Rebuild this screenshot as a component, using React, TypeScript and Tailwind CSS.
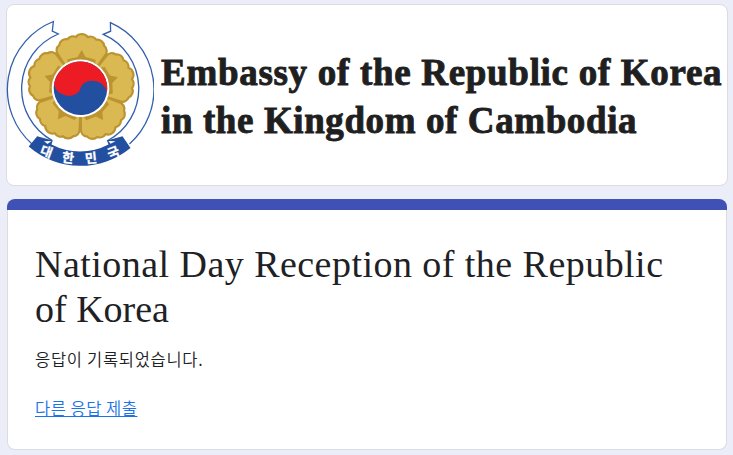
const PETAL =
    'M-13-18 L-23.5-33.5 A6.5 6.5 0 0 1 -22.5-43 A7 7 0 0 1 -14.5-49 A7 7 0 0 1 -6-51.5 A7.5 7.5 0 0 1 6-51.5 A7 7 0 0 1 14.5-49 A7 7 0 0 1 22.5-43 A6.5 6.5 0 0 1 23.5-33.5 L13-18Z';

const PETAL_ANGLES = [1, 73, 145, 217, 289];

const BANNER_LETTERS = [
    { char: '대', x: 46.5, y: 151.6, angle: 20 },
    { char: '한', x: 68, y: 157.6, angle: 7 },
    { char: '민', x: 91, y: 158.2, angle: -6 },
    { char: '국', x: 113.4, y: 152.4, angle: -21 },
];

const Emblem = () => (
    <svg width="148" height="150" viewBox="6 19 148 150" className="shrink-0" aria-hidden="true">
        {/* Ribbon */}
        <g fill="none" stroke="#315fad" strokeWidth="1.3">
            <path d="M32 144 A73 73 0 0 1 53.4 21.5 L52.3 31 L58.3 34 A59.2 59.2 0 0 0 52.3 140.6" />
            <path d="M129.5 144 A73 73 0 0 0 110.4 22.7 L110.6 31.2 L103.3 34.3 A59.2 59.2 0 0 1 107 141" />
        </g>

        {/* Flower */}
        <g transform="translate(81 88.5)">
            <circle r="42" fill="#bb9431" />
            {PETAL_ANGLES.map((angle) => (
                <g key={angle} transform={`rotate(${angle})`}>
                    <path d={PETAL} fill="#dab852" stroke="#bb9431" strokeWidth="2.2" />
                    <path d="M0-38.5 L4-31.5 L14-29 V-24 H-14 V-29 L-4-31.5Z" fill="#bb9431" />
                </g>
            ))}
        </g>

        {/* Taegeuk */}
        <g transform="translate(80.5 88.3) rotate(14)">
            <circle r="28.8" fill="#fff" />
            <circle r="26.8" fill="#234fa0" />
            <path
                d="M-26.8 0 A26.8 26.8 0 0 1 26.8 0 A13.4 10.5 0 0 0 0 0 A13.4 10.5 0 0 1 -26.8 0Z"
                fill="#ed1c24"
            />
        </g>

        {/* Name banner */}
        <path
            d="M28.7 146.5 L37.2 136.3 L52.7 140.5 L51.5 144.5 A61.5 61.5 0 0 0 108.5 144.5 L107 140.5 L122.5 136.3 L130.5 148 A79 79 0 0 1 28.7 146.5Z"
            fill="#234fa0"
        />
        <path d="M44 141.3 L51.5 140.9 L47.5 144Z" fill="#fff" />
        <path d="M115.5 141.3 L108.5 141 L110.5 143.8Z" fill="#fff" />
        {BANNER_LETTERS.map(({ char, x, y, angle }) => (
            <text
                key={char}
                transform={`translate(${x} ${y}) rotate(${angle})`}
                y="4.8"
                textAnchor="middle"
                fill="#fff"
                stroke="#fff"
                strokeWidth="0.3"
                className="font-['Noto_Sans_CJK_KR',sans-serif] text-[13px] font-bold"
            >
                {char}
            </text>
        ))}
    </svg>
);

export default function App() {
    return (
        <div className="flex h-[455px] w-full flex-col gap-[13px] overflow-hidden bg-[#ebeef8] pt-1 pr-[5px] pl-[6px] font-['Noto_Sans_CJK_KR',sans-serif] text-[#202124]">
            <header className="flex h-[182px] shrink-0 items-start gap-[7px] rounded-lg border border-[#dadce0] bg-white pt-[14px]">
                <div className="-ml-px">
                    <Emblem />
                </div>
                <p className="pt-[30px] font-['Liberation_Serif',serif] text-[37px] leading-[48px] font-bold whitespace-nowrap text-[#1f1f1f] [-webkit-text-stroke:0.9px_#1f1f1f]">
                    <span className="block tracking-[0.7px]">Embassy of the Republic of Korea</span>
                    <span className="block tracking-[0.6px]">in the Kingdom of Cambodia</span>
                </p>
            </header>

            <main className="mr-px ml-px h-[251px] shrink-0 rounded-lg border border-t-0 border-[#dadce0] bg-white">
                <div className="-mx-px h-[11px] rounded-t-lg bg-[#3f51b5]" />
                <div className="px-[27px] pt-8">
                    <h1 className="font-['Liberation_Serif',serif] text-[38px] leading-[45px] whitespace-nowrap">
                        <span className="block tracking-[0.46px]">National Day Reception of the Republic</span>
                        <span className="block">of Korea</span>
                    </h1>
                    <p className="mt-[15px] text-[16.5px] leading-6 font-[350] tracking-[0.7px]">응답이 기록되었습니다.</p>
                    <a
                        href="#"
                        className="mt-[25px] block w-fit text-[16.5px] leading-6 font-[350] tracking-[0.5px] text-[#1a73e8] underline"
                    >
                        다른 응답 제출
                    </a>
                </div>
            </main>
        </div>
    );
}
